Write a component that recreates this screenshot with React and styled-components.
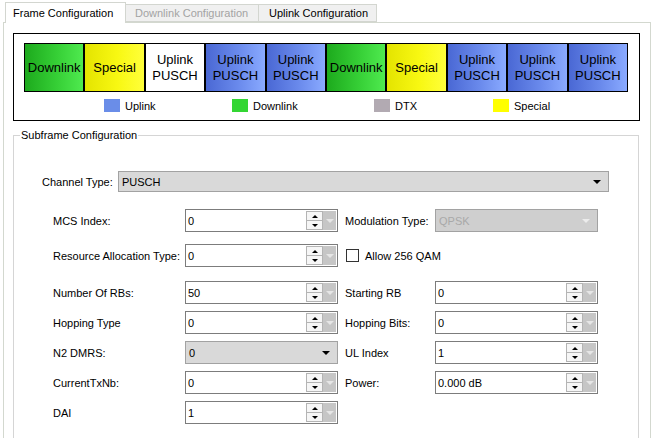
import React from 'react';
import styled, { createGlobalStyle } from 'styled-components';

const GlobalStyle = createGlobalStyle`
  html, body {
    margin: 0;
    padding: 0;
    background: #fff;
    overflow: hidden;
  }
  body {
    font-family: "Liberation Sans", Arial, sans-serif;
    font-size: 11px;
    color: #000;
  }
`;

const Window = styled.div`
  width: 652px;
  height: 438px;
  box-sizing: border-box;
  padding: 2px 1px 0 3px;
  overflow: hidden;
`;

const TabBar = styled.div`
  display: flex;
  align-items: flex-end;
  height: 20px;
  padding-left: 2px;
`;

const Tab = styled.div`
  box-sizing: border-box;
  width: ${(p) => p.width}px;
  height: ${(p) => (p.active ? 21 : 18)}px;
  margin-bottom: ${(p) => (p.active ? -1 : 0)}px;
  margin-left: ${(p) => (p.active ? 0 : -1)}px;
  padding-left: ${(p) => p.indent}px;
  display: flex;
  align-items: center;
  border: 1px solid #d3d6d0;
  border-bottom: ${(p) => (p.active ? 'none' : '1px solid #d3d6d0')};
  background: ${(p) => (p.active ? '#fff' : '#f0f0f0')};
  color: ${(p) => (p.disabled ? '#a3a3a3' : '#000')};
  position: relative;
  z-index: ${(p) => (p.active ? 2 : 1)};
  white-space: nowrap;
`;

const Pane = styled.div`
  height: 440px;
  border: 1px solid #d3d8cf;
  padding: 10px 10px 0 9px;
`;

const FrameBox = styled.div`
  border: 1px solid #000;
  padding: 9px 11px 0 10px;
`;

const CellRow = styled.div`
  display: flex;
  height: 49px;
`;

const cellBg = {
  downlink: 'linear-gradient(90deg, #1daa1d 0%, #36cf36 55%, #4fea4f 100%)',
  special: 'linear-gradient(90deg, #e4e400 0%, #f8f812 55%, #ffff3a 100%)',
  blank: '#fff',
  uplink: 'linear-gradient(90deg, #4a68d4 0%, #6a8aec 55%, #8aaaff 100%)',
};

const Cell = styled.div`
  flex: 1;
  box-sizing: border-box;
  border: 1px solid #000;
  background: ${(p) => cellBg[p.kind]};
  display: flex;
  align-items: center;
  justify-content: center;
  text-align: center;
  font-size: 13px;
  line-height: 16px;
  color: #000;
`;

const LegendRow = styled.div`
  display: grid;
  grid-template-columns: 128px 142px 119px auto;
  padding: 7px 0 8px 80px;
  height: 13px;
`;

const LegendItem = styled.div`
  display: flex;
  align-items: center;
  gap: 5px;
  white-space: nowrap;
`;

const Swatch = styled.span`
  width: 16px;
  height: 13px;
  background: ${(p) => p.color};
`;

const GroupBox = styled.fieldset`
  margin: 8px 1px 0 0;
  padding: 0 0 40px;
  border: 1px solid #d5d5d5;
  min-width: 0;
`;

const GroupTitle = styled.legend`
  margin-left: 6px;
  padding: 0 1px;
  line-height: 13px;
`;

const GroupBody = styled.div`
  padding-top: 29px;
`;

const ChannelRow = styled.div`
  display: flex;
  align-items: center;
  padding-left: 28px;
`;

const ChannelLabel = styled.span`
  width: 76px;
`;

const Combo = styled.div`
  box-sizing: border-box;
  width: ${(p) => p.width}px;
  height: ${(p) => p.height || 23}px;
  border: 1px solid #a2a2a2;
  background: ${(p) => (p.disabled ? '#cfcfcf' : '#d9d9d9')};
  color: ${(p) => (p.disabled ? '#a9a9a9' : '#000')};
  display: flex;
  align-items: center;
  justify-content: space-between;
  padding: 0 7px 0 3px;
`;

const Caret = styled.span`
  width: 0;
  height: 0;
  border-left: ${(p) => p.size}px solid transparent;
  border-right: ${(p) => p.size}px solid transparent;
  border-top: ${(p) => p.size}px solid ${(p) => p.color};
`;

const UpCaret = styled.span`
  width: 0;
  height: 0;
  border-left: 3px solid transparent;
  border-right: 3px solid transparent;
  border-bottom: 3px solid #000;
`;

const FormRow = styled.div`
  display: grid;
  grid-template-columns: 132px 153px 97px 163px;
  align-items: center;
  height: 23px;
  margin-top: ${(p) => p.gap}px;
  padding-left: 39px;
`;

const Label = styled.span`
  padding-left: ${(p) => (p.right ? 7 : 0)}px;
  white-space: nowrap;
`;

const SpinBox = styled.div`
  box-sizing: border-box;
  height: 23px;
  border: 1px solid #7c7c7c;
  background: #fff;
  display: flex;
  align-items: stretch;
`;

const SpinValue = styled.span`
  flex: 1;
  display: flex;
  align-items: center;
  padding-left: 2px;
`;

const SpinButtons = styled.div`
  width: 17px;
  display: flex;
  flex-direction: column;
  padding: 1px 0;
  box-sizing: border-box;
`;

const SpinButton = styled.div`
  flex: 1;
  display: flex;
  align-items: center;
  justify-content: center;
  border: 1px solid #b4b4b4;
  border-top: ${(p) => (p.down ? 'none' : '1px solid #b4b4b4')};
  background: #f6f6f6;
`;

const DropPart = styled.div`
  width: 13px;
  margin: 1px 1px 1px 0;
  background: #c6c6c6;
  display: flex;
  align-items: center;
  justify-content: center;
`;

const CheckField = styled.label`
  grid-column: 3 / span 2;
  display: flex;
  align-items: center;
  gap: 6px;
  padding-left: 8px;
`;

const CheckBox = styled.span`
  width: 11px;
  height: 11px;
  border: 1px solid #333;
  background: #fff;
`;

function Spinner({ value }) {
  return (
    <SpinBox>
      <SpinValue>{value}</SpinValue>
      <SpinButtons>
        <SpinButton>
          <UpCaret />
        </SpinButton>
        <SpinButton down>
          <Caret size={3} color="#000" />
        </SpinButton>
      </SpinButtons>
      <DropPart>
        <Caret size={4} color="#e6e6e6" />
      </DropPart>
    </SpinBox>
  );
}

const cells = [
  { kind: 'downlink', text: 'Downlink' },
  { kind: 'special', text: 'Special' },
  { kind: 'blank', text: 'Uplink\nPUSCH' },
  { kind: 'uplink', text: 'Uplink\nPUSCH' },
  { kind: 'uplink', text: 'Uplink\nPUSCH' },
  { kind: 'downlink', text: 'Downlink' },
  { kind: 'special', text: 'Special' },
  { kind: 'uplink', text: 'Uplink\nPUSCH' },
  { kind: 'uplink', text: 'Uplink\nPUSCH' },
  { kind: 'uplink', text: 'Uplink\nPUSCH' },
];

const legend = [
  { color: '#6a8de8', text: 'Uplink' },
  { color: '#33d633', text: 'Downlink' },
  { color: '#b2aab2', text: 'DTX' },
  { color: '#ffff00', text: 'Special' },
];

export default function App() {
  return (
    <>
      <GlobalStyle />
      <Window>
        <TabBar>
          <Tab active width={121} indent={7}>
            Frame Configuration
          </Tab>
          <Tab disabled width={134} indent={9}>
            Downlink Configuration
          </Tab>
          <Tab width={119} indent={10}>
            Uplink Configuration
          </Tab>
        </TabBar>
        <Pane>
          <FrameBox>
            <CellRow>
              {cells.map((c, i) => (
                <Cell key={i} kind={c.kind}>
                  {c.text.split('\n').map((line, j) => (
                    <React.Fragment key={j}>
                      {j > 0 && <br />}
                      {line}
                    </React.Fragment>
                  ))}
                </Cell>
              ))}
            </CellRow>
            <LegendRow>
              {legend.map((l) => (
                <LegendItem key={l.text}>
                  <Swatch color={l.color} />
                  {l.text}
                </LegendItem>
              ))}
            </LegendRow>
          </FrameBox>

          <GroupBox>
            <GroupTitle>Subframe Configuration</GroupTitle>
            <GroupBody>
              <ChannelRow>
                <ChannelLabel>Channel Type:</ChannelLabel>
                <Combo width={491} height={21}>
                  PUSCH
                  <Caret size={4} color="#000" />
                </Combo>
              </ChannelRow>

              <FormRow gap={17}>
                <Label>MCS Index:</Label>
                <Spinner value="0" />
                <Label right>Modulation Type:</Label>
                <Combo width={163} disabled>
                  QPSK
                  <Caret size={4} color="#ececec" />
                </Combo>
              </FormRow>

              <FormRow gap={12}>
                <Label>Resource Allocation Type:</Label>
                <Spinner value="0" />
                <CheckField>
                  <CheckBox />
                  Allow 256 QAM
                </CheckField>
              </FormRow>

              <FormRow gap={14}>
                <Label>Number Of RBs:</Label>
                <Spinner value="50" />
                <Label right>Starting RB</Label>
                <Spinner value="0" />
              </FormRow>

              <FormRow gap={7}>
                <Label>Hopping Type</Label>
                <Spinner value="0" />
                <Label right>Hopping Bits:</Label>
                <Spinner value="0" />
              </FormRow>

              <FormRow gap={7}>
                <Label>N2 DMRS:</Label>
                <Combo width={153}>
                  0
                  <Caret size={4} color="#000" />
                </Combo>
                <Label right>UL Index</Label>
                <Spinner value="1" />
              </FormRow>

              <FormRow gap={7}>
                <Label>CurrentTxNb:</Label>
                <Spinner value="0" />
                <Label right>Power:</Label>
                <Spinner value="0.000 dB" />
              </FormRow>

              <FormRow gap={7}>
                <Label>DAI</Label>
                <Spinner value="1" />
              </FormRow>
            </GroupBody>
          </GroupBox>
        </Pane>
      </Window>
    </>
  );
}
